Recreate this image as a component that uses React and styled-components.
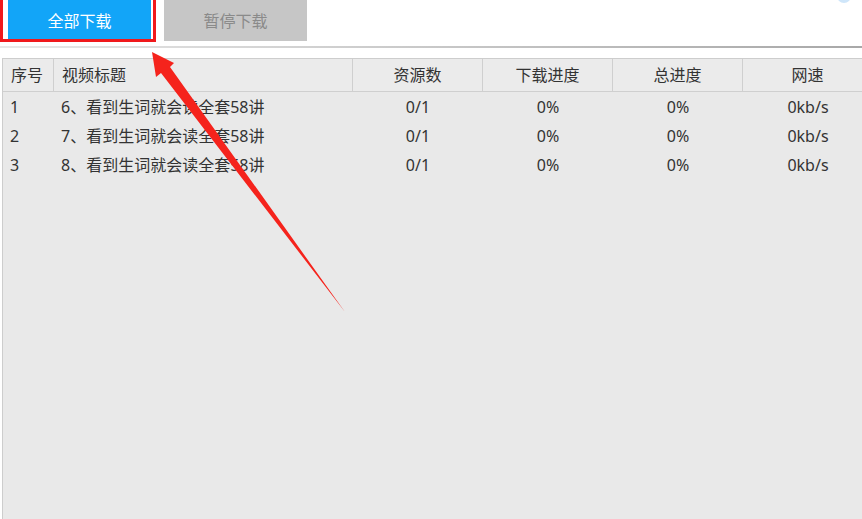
import React from 'react';
import styled, { createGlobalStyle } from 'styled-components';

const GlobalStyle = createGlobalStyle`
  html, body {
    margin: 0;
    padding: 0;
    background: #ffffff;
    overflow: hidden;
  }
  body {
    font-family: 'Noto Sans', 'Noto Sans CJK SC', sans-serif;
  }
`;

const Page = styled.div`
  position: relative;
  width: 862px;
  height: 519px;
  display: flex;
  flex-direction: column;
  overflow: hidden;
  background: #ffffff;
`;

const Toolbar = styled.div`
  display: flex;
  flex-direction: row;
  gap: 13px;
  padding-left: 8px;
  height: 41px;
`;

const ActionButton = styled.button`
  width: 143px;
  height: 41px;
  border: none;
  margin: 0;
  padding: 0 0 2px;
  font-family: 'Noto Sans CJK SC', sans-serif;
  font-size: 16px;
  background: ${(p) => (p.$primary ? '#12a5f8' : '#c6c6c6')};
  color: ${(p) => (p.$primary ? '#ffffff' : '#8a8a8a')};
  cursor: pointer;
`;

const Divider = styled.div`
  margin-top: 5px;
  height: 2px;
  background: linear-gradient(to right, #e8e8e8, #a8a8a8);
`;

const TableWrap = styled.div`
  flex: 1;
  margin-top: 10px;
  margin-left: 2px;
  border-top: 1px solid #cdcdcd;
  border-left: 1px solid #cdcdcd;
  background: #e9e9e9;
  overflow: hidden;
`;

const Grid = styled.div`
  display: grid;
  grid-template-columns: 51px 299px 130px 130px 130px 130px;
  width: 870px;
`;

const HeadCell = styled.div`
  height: 32px;
  display: flex;
  align-items: center;
  justify-content: ${(p) => (p.$left ? 'flex-start' : 'center')};
  padding-left: ${(p) => (p.$left ? '8px' : '0')};
  border-right: 1px solid #cfcfcf;
  border-bottom: 1px solid #cfcfcf;
  background: #ebebeb;
  color: #333333;
  font-size: 16px;
  line-height: 1;
`;

const Cell = styled.div`
  height: 29px;
  display: flex;
  align-items: center;
  justify-content: ${(p) => (p.$left ? 'flex-start' : 'center')};
  padding-left: ${(p) => (p.$left ? p.$pad : '0')};
  padding-right: ${(p) => p.$shift || '0'};
  color: #333333;
  font-size: 16px;
  line-height: 1;
  white-space: nowrap;
`;

const Highlight = styled.div`
  position: absolute;
  left: 0;
  top: -4px;
  width: 150px;
  height: 40px;
  border: 3px solid #f0191c;
  pointer-events: none;
`;

const Arrow = styled.svg`
  position: absolute;
  left: 0;
  top: 0;
  pointer-events: none;
`;

const Blip = styled.div`
  position: absolute;
  left: 837px;
  top: -11px;
  width: 14px;
  height: 14px;
  border-radius: 50%;
  background: #cfe6fa;
`;

const columns = [
  { title: '序号', left: true },
  { title: '视频标题', left: true },
  { title: '资源数' },
  { title: '下载进度' },
  { title: '总进度' },
  { title: '网速' },
];

const tasks = [
  { id: 1, name: '6、看到生词就会读全套58讲' },
  { id: 2, name: '7、看到生词就会读全套58讲' },
  { id: 3, name: '8、看到生词就会读全套58讲' },
];

const App = () => {
  return (
    <>
      <GlobalStyle />
      <Page>
        <Toolbar>
          <ActionButton $primary>全部下载</ActionButton>
          <ActionButton>暂停下载</ActionButton>
        </Toolbar>
        <Divider />
        <TableWrap>
          <Grid>
            {columns.map((c) => (
              <HeadCell key={c.title} $left={c.left}>
                {c.title}
              </HeadCell>
            ))}
            {tasks.map((t) => (
              <React.Fragment key={t.id}>
                <Cell $left $pad="7px">{t.id}</Cell>
                <Cell $left $pad="7px">{t.name}</Cell>
                <Cell>0/1</Cell>
                <Cell>0%</Cell>
                <Cell>0%</Cell>
                <Cell>0kb/s</Cell>
              </React.Fragment>
            ))}
          </Grid>
        </TableWrap>

        <Highlight />
        <Blip />
        {/* 标注箭头 */}
        <Arrow width="862" height="519" viewBox="0 0 862 519">
          <polygon
            points="152,52 174,63 170,67 345,312 161,73 156,77"
            fill="#f5231c"
          />
        </Arrow>
      </Page>
    </>
  );
};

export default App;
